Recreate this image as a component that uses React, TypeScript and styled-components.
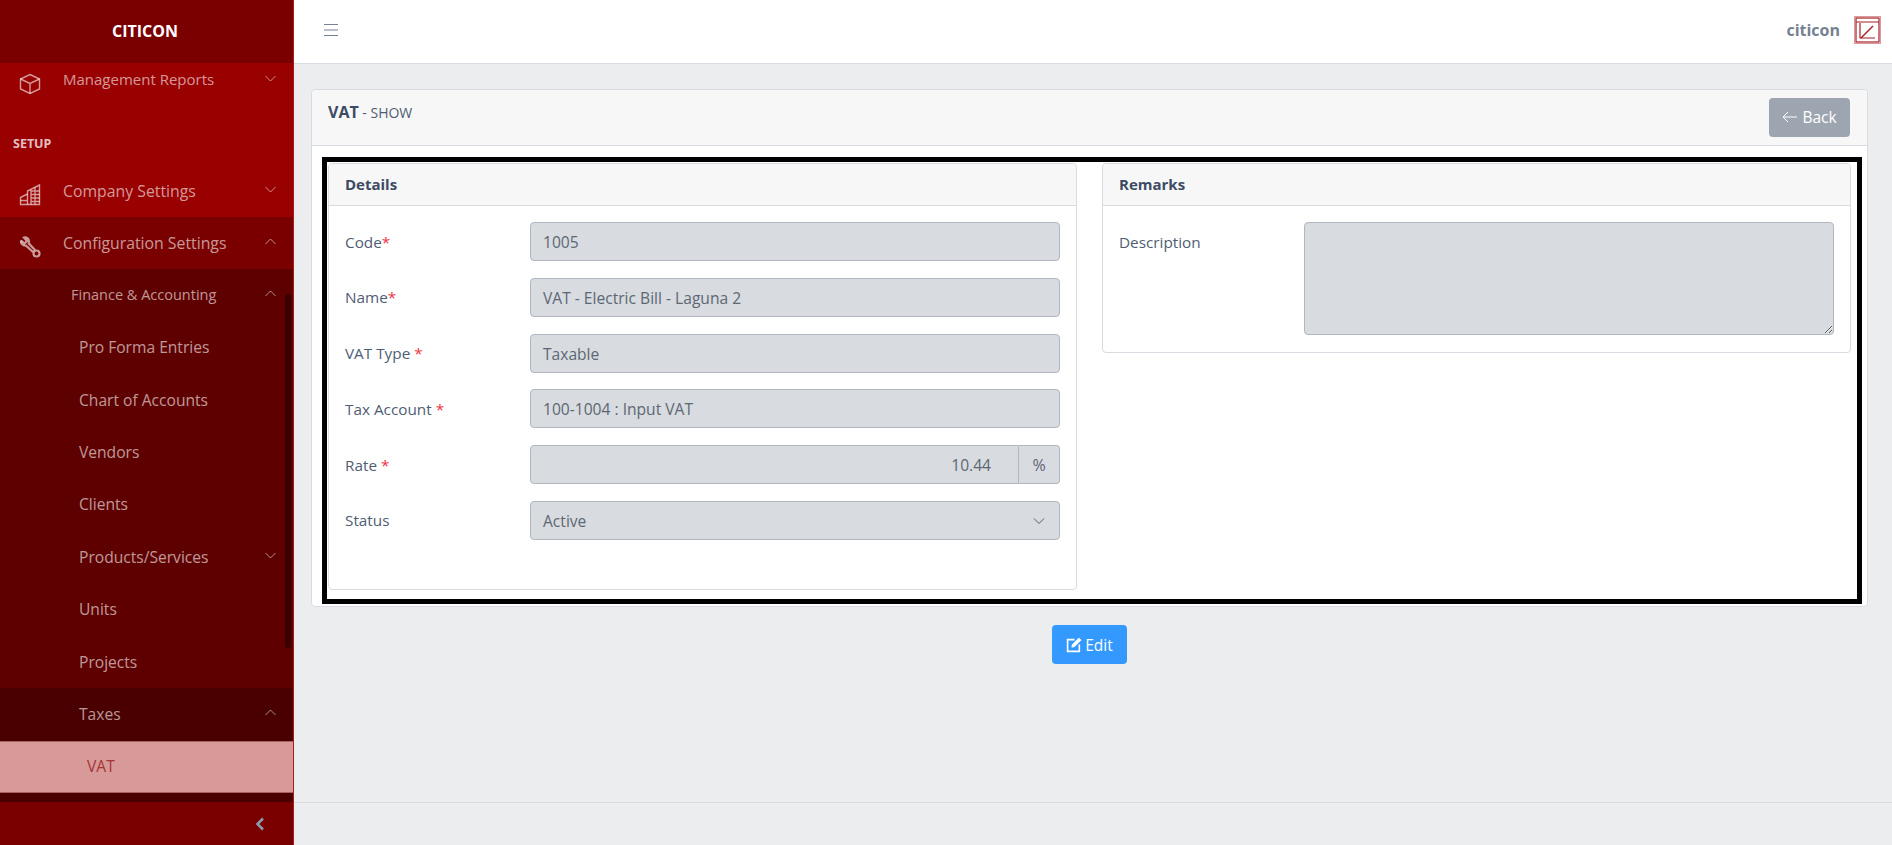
import React from 'react';
import styled, { createGlobalStyle } from 'styled-components';

const GlobalStyle = createGlobalStyle`
  html, body {
    margin: 0;
    padding: 0;
    height: 845px;
    overflow: hidden;
    background: #ebedef;
    font-family: "Open Sans", "Noto Sans", sans-serif;
  }
  * { box-sizing: border-box; }
`;

const Page = styled.div`
  display: flex;
  width: 1892px;
  height: 845px;
  overflow: hidden;
`;

const Sidebar = styled.aside`
  position: relative;
  display: flex;
  flex-direction: column;
  flex: 0 0 294px;
  height: 845px;
  background: #990000;
  border-right: 1px solid #a81a1a;
`;

const Brand = styled.div`
  display: flex;
  flex: 0 0 63px;
  align-items: center;
  justify-content: center;
  padding: 0 3px 2px 0;
  background: #7a0000;
  color: #fff;
  font-size: 16px;
  font-weight: 700;
`;

const Nav = styled.nav`
  flex: 1;
  min-height: 0;
  overflow: hidden;
  background: #4b0000;
`;

const NavScroll = styled.div`
  margin-top: -9px;
`;

const Row = styled.div<{ $bg: string; $indent: number; $size?: number; $raise?: number }>`
  position: relative;
  display: flex;
  align-items: center;
  height: 52.4px;
  padding: 0 0 ${(p) => p.$raise ?? 1}px ${(p) => p.$indent}px;
  background: ${(p) => p.$bg};
  color: rgba(255, 255, 255, 0.6);
  font-size: ${(p) => p.$size ?? 15.6}px;
`;

const ActiveRow = styled(Row)`
  background: #d89999;
  color: #a33535;
  border-top: 1px solid #a85f5f;
  border-bottom: 1px solid #a85f5f;
`;

const SectionTitle = styled.div`
  display: flex;
  align-items: center;
  height: 58px;
  padding: 17px 0 0 13px;
  background: #990000;
  color: rgba(255, 255, 255, 0.75);
  font-size: 12.5px;
  font-weight: 700;
`;

const NavIcon = styled.svg`
  position: absolute;
  left: 18px;
  top: 50%;
  width: 24px;
  height: 24px;
  margin-top: 4px;
  transform: translateY(-50%);
  fill: none;
  stroke: rgba(255, 255, 255, 0.6);
  stroke-width: 1.4;
`;

const Caret = styled.svg`
  position: absolute;
  right: 17px;
  top: 50%;
  width: 11px;
  height: 7px;
  margin-top: -5px;
  fill: none;
  stroke: rgba(255, 255, 255, 0.55);
  stroke-width: 1;
`;

const ScrollThumb = styled.div`
  position: absolute;
  left: 285px;
  top: 294px;
  width: 6px;
  height: 354px;
  border-radius: 3px;
  background: #380000;
`;

const SidebarFooter = styled.div`
  display: flex;
  flex: 0 0 43px;
  align-items: center;
  justify-content: flex-end;
  padding-right: 28px;
  background: #7a0000;
`;

const Main = styled.div`
  display: flex;
  flex: 1;
  flex-direction: column;
  min-width: 0;
`;

const TopBar = styled.header`
  display: flex;
  flex: 0 0 64px;
  align-items: center;
  justify-content: space-between;
  padding: 0 11px 3px 29px;
  background: #fff;
  border-bottom: 1px solid #d8dbe0;
`;

const UserBox = styled.div`
  display: flex;
  align-items: center;
  gap: 14px;
  color: #768192;
  font-size: 16px;
  font-weight: 700;
`;

const Content = styled.main`
  flex: 1;
  padding: 25px 24px 0 17px;
`;

const OuterCard = styled.section`
  background: #fff;
  border: 1px solid #d8dbe0;
  border-radius: 4px;
`;

const OuterHeader = styled.div`
  display: flex;
  align-items: flex-start;
  justify-content: space-between;
  height: 56px;
  padding: 12px 17px 0 16px;
  background: #f7f7f7;
  border-bottom: 1px solid #d8dbe0;
  border-radius: 4px 4px 0 0;
`;

const Title = styled.div`
  color: #4f5d73;
  font-size: 14px;
  line-height: 20px;

  strong {
    color: #3c4b64;
    font-size: 16px;
    font-weight: 700;
  }
`;

const BackButton = styled.div`
  display: flex;
  align-items: center;
  justify-content: center;
  gap: 4px;
  width: 81px;
  height: 39px;
  margin-top: -4px;
  padding-bottom: 1px;
  background: #9da5b1;
  border-radius: 4px;
  color: #fff;
  font-size: 15.500px;
`;

const OuterBody = styled.div`
  padding: 11px 5px 2px 10px;
`;

const Outlined = styled.div`
  display: grid;
  grid-template-columns: 749px 749px;
  column-gap: 25px;
  align-items: start;
  padding: 1px 5px 9px 1px;
  border: 5px solid #000;
`;

const Panel = styled.div<{ $height: number }>`
  height: ${(p) => p.$height}px;
  background: #fff;
  border: 1px solid #d8dbe0;
  border-radius: 4px;
`;

const PanelHeader = styled.div`
  display: flex;
  align-items: center;
  height: 42px;
  padding: 0 0 2px 16px;
  background: #f7f7f7;
  border-bottom: 1px solid #d8dbe0;
  border-radius: 4px 4px 0 0;
  color: #3c4b64;
  font-size: 15px;
  font-weight: 700;
`;

const PanelBody = styled.div`
  display: flex;
  flex-direction: column;
  gap: 16.75px;
  padding: 16px 16px 0;
`;

const FormRow = styled.div`
  display: grid;
  grid-template-columns: 185px 1fr;
  align-items: center;
`;

const TopFormRow = styled(FormRow)`
  align-items: start;
`;

const Label = styled.div<{ $top?: boolean }>`
  color: #4f5d73;
  font-size: 15.300px;
  line-height: 20px;
  padding-top: ${(p) => (p.$top ? 10 : 0)}px;
`;

const Star = styled.span`
  color: #f0333f;
`;

const Field = styled.div<{ $right?: boolean }>`
  display: flex;
  flex: 1;
  align-items: center;
  justify-content: ${(p) => (p.$right ? 'flex-end' : 'space-between')};
  height: 39px;
  padding: 1px 14px 0 12px;
  background: #d8dbe0;
  border: 1px solid #b1b7c1;
  border-radius: 4px;
  color: #5c6873;
  font-size: 15.600px;
`;

const RateField = styled(Field)`
  padding-right: 27px;
  border-radius: 4px 0 0 4px;
`;

const InputGroup = styled.div`
  display: flex;
`;

const Addon = styled.div`
  display: flex;
  flex: 0 0 41px;
  align-items: center;
  justify-content: center;
  height: 39px;
  background: #d8dbe0;
  border: 1px solid #b1b7c1;
  border-left: 0;
  border-radius: 0 4px 4px 0;
  color: #5c6873;
  font-size: 16px;
`;

const TextArea = styled.textarea`
  display: block;
  width: 100%;
  height: 113px;
  background: #d8dbe0;
  border: 1px solid #b1b7c1;
  border-radius: 4px;
  outline: none;
`;

const Actions = styled.div`
  display: flex;
  justify-content: center;
  margin-top: 18px;
`;

const EditButton = styled.div`
  display: flex;
  align-items: center;
  justify-content: center;
  gap: 3px;
  width: 75px;
  height: 39px;
  background: #3399ff;
  border-radius: 4px;
  color: #fff;
  font-size: 15.500px;
`;

const PageFooter = styled.footer`
  flex: 0 0 43px;
  background: #ebedef;
  border-top: 1px solid #d8dbe0;
`;

function ChevronDown() {
  return (
    <Caret viewBox="0 0 11 7">
      <polyline points="0.5,1 5.5,6 10.5,1" />
    </Caret>
  );
}

function ChevronUp() {
  return (
    <Caret viewBox="0 0 11 7">
      <polyline points="0.5,6 5.5,1 10.5,6" />
    </Caret>
  );
}

const subItems = [
  { label: 'Pro Forma Entries' },
  { label: 'Chart of Accounts' },
  { label: 'Vendors' },
  { label: 'Clients' },
  { label: 'Products/Services', caret: true },
  { label: 'Units' },
  { label: 'Projects' },
];

export default function App(): React.ReactElement {
  return (
    <Page>
      <GlobalStyle />
      <Sidebar>
        <Brand>CITICON</Brand>
        <Nav>
          <NavScroll>
            <Row $bg="#990000" $indent={63} $size={15} $raise={3}>
              <NavIcon viewBox="0 0 24 24">
                <path d="M12 2.500 21.500 7v10L12 21.500 2.500 17V7Z" />
                <path d="M2.500 7 12 11.500 21.500 7M12 11.500v10" />
              </NavIcon>
              Management Reports
              <ChevronDown />
            </Row>
            <SectionTitle>SETUP</SectionTitle>
            <Row $bg="#990000" $indent={63} $size={15.800} $raise={0}>
              <NavIcon viewBox="0 0 24 24">
                <path d="M2.500 21.500v-7l7-3.500V8l12-6v19.500Z" />
                <path d="M13 21.500V7M9.500 11v10.500M2.500 17.500h7M13 8h8.500M13 11.500h8.500M13 15h8.500M13 18.500h8.500M17 4.500v17" />
              </NavIcon>
              Company Settings
              <ChevronDown />
            </Row>
            <Row $bg="#7a0000" $indent={63} $size={15.800} $raise={0}>
              <NavIcon viewBox="0 0 24 24">
                <path strokeWidth="2.200" d="M3 5.500 6.500 8.500 9 6 6 2.500C8.500 1.800 11 3.500 11 6.500c0 .8-.2 1.300-.3 1.800L17 15" />
                <path strokeWidth="2.200" d="M3 5.500C2.500 8.500 5 11 8 10.700L15 17" />
                <circle cx="18.500" cy="18.500" r="3" strokeWidth="2.200" />
              </NavIcon>
              Configuration Settings
              <ChevronUp />
            </Row>
            <Row $bg="#5f0000" $indent={71} $size={14.500}>
              Finance &amp; Accounting
              <ChevronUp />
            </Row>
            {subItems.map((item) => (
              <Row key={item.label} $bg="#5f0000" $indent={79}>
                {item.label}
                {item.caret && <ChevronDown />}
              </Row>
            ))}
            <Row $bg="#4b0000" $indent={79}>
              Taxes
              <ChevronUp />
            </Row>
            <ActiveRow $bg="#d89999" $indent={87}>VAT</ActiveRow>
          </NavScroll>
        </Nav>
        <ScrollThumb />
        <SidebarFooter>
          <svg width="10" height="14" viewBox="0 0 10 14" fill="none" stroke="#8a9bb0" strokeWidth="2.500">
            <polyline points="8,1.500 2.500,7 8,12.500" />
          </svg>
        </SidebarFooter>
      </Sidebar>
      <Main>
        <TopBar>
          <svg width="16" height="14" viewBox="0 0 16 14" stroke="#768192" strokeWidth="1">
            <path d="M1 1.500h14M1 7h14M1 12.500h14" />
          </svg>
          <UserBox>
            citicon
            <svg width="27" height="28" viewBox="0 0 27 28" fill="none" stroke="#a81c22">
              <rect x="0.500" y="0.500" width="26" height="27" stroke="#d99a9c" />
              <rect x="2" y="2" width="23" height="24" strokeWidth="1.200" />
              <path d="M2 6h23M6 7v15h15" strokeWidth="1.200" />
              <path d="M7 22 19 10" strokeWidth="1.500" />
            </svg>
          </UserBox>
        </TopBar>
        <Content>
          <OuterCard>
            <OuterHeader>
              <Title>
                <strong>VAT</strong>
                {' - SHOW'}
              </Title>
              <BackButton>
                <svg width="16" height="12" viewBox="0 0 16 12" fill="none" stroke="#fff" strokeWidth="1">
                  <path d="M15 6H1M6 1 1 6l5 5" />
                </svg>
                Back
              </BackButton>
            </OuterHeader>
            <OuterBody>
              <Outlined>
                <Panel $height={427}>
                  <PanelHeader>Details</PanelHeader>
                  <PanelBody>
                    <FormRow>
                      <Label>Code<Star>*</Star></Label>
                      <Field>1005</Field>
                    </FormRow>
                    <FormRow>
                      <Label>Name<Star>*</Star></Label>
                      <Field>VAT - Electric Bill - Laguna 2</Field>
                    </FormRow>
                    <FormRow>
                      <Label>VAT Type <Star>*</Star></Label>
                      <Field>Taxable</Field>
                    </FormRow>
                    <FormRow>
                      <Label>Tax Account <Star>*</Star></Label>
                      <Field>100-1004 : Input VAT</Field>
                    </FormRow>
                    <FormRow>
                      <Label>Rate <Star>*</Star></Label>
                      <InputGroup>
                        <RateField $right>10.44</RateField>
                        <Addon>%</Addon>
                      </InputGroup>
                    </FormRow>
                    <FormRow>
                      <Label>Status</Label>
                      <Field>
                        Active
                        <svg width="12" height="8" viewBox="0 0 12 8" fill="none" stroke="#4f5d73" strokeWidth="1">
                          <polyline points="1,1.500 6,6.500 11,1.500" />
                        </svg>
                      </Field>
                    </FormRow>
                  </PanelBody>
                </Panel>
                <Panel $height={190}>
                  <PanelHeader>Remarks</PanelHeader>
                  <PanelBody>
                    <TopFormRow>
                      <Label $top>Description</Label>
                      <TextArea readOnly />
                    </TopFormRow>
                  </PanelBody>
                </Panel>
              </Outlined>
            </OuterBody>
          </OuterCard>
          <Actions>
            <EditButton>
              <svg width="16" height="16" viewBox="0 0 15 15" fill="none" stroke="#fff" strokeWidth="1.500">
                <path d="M8 2.500H1.500v11h11V7" />
                <path d="M5.500 9.500 6 7l6-6 2 2-6 6Z" fill="#fff" strokeWidth="0.800" />
              </svg>
              Edit
            </EditButton>
          </Actions>
        </Content>
        <PageFooter />
      </Main>
    </Page>
  );
}
